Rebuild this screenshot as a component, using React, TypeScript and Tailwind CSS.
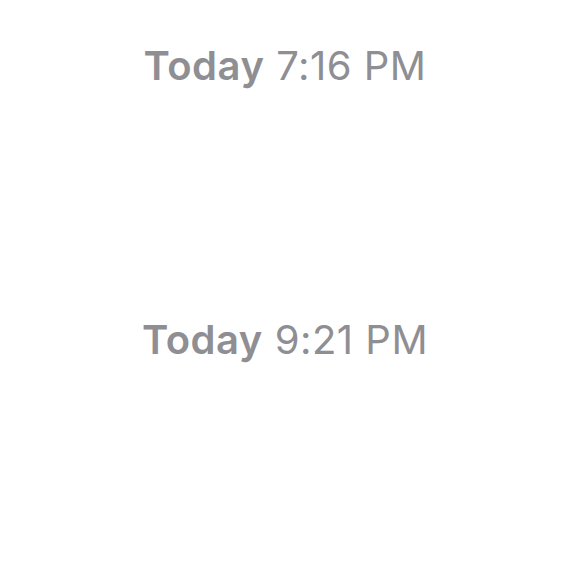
export default function App() {
  const stamps = ["7:16 PM", "9:21 PM"];
  return (
    <div className="w-[580px] h-[580px] bg-white flex flex-col items-center pt-[42px] pr-[10px] gap-[226px] font-['Inter',sans-serif] text-[#8e8e93]">
      {stamps.map((t) => (
        <div key={t} className="text-[40px] leading-[48px] tracking-[0.5px]">
          <span className="font-semibold">Today</span> {t}
        </div>
      ))}
    </div>
  );
}
